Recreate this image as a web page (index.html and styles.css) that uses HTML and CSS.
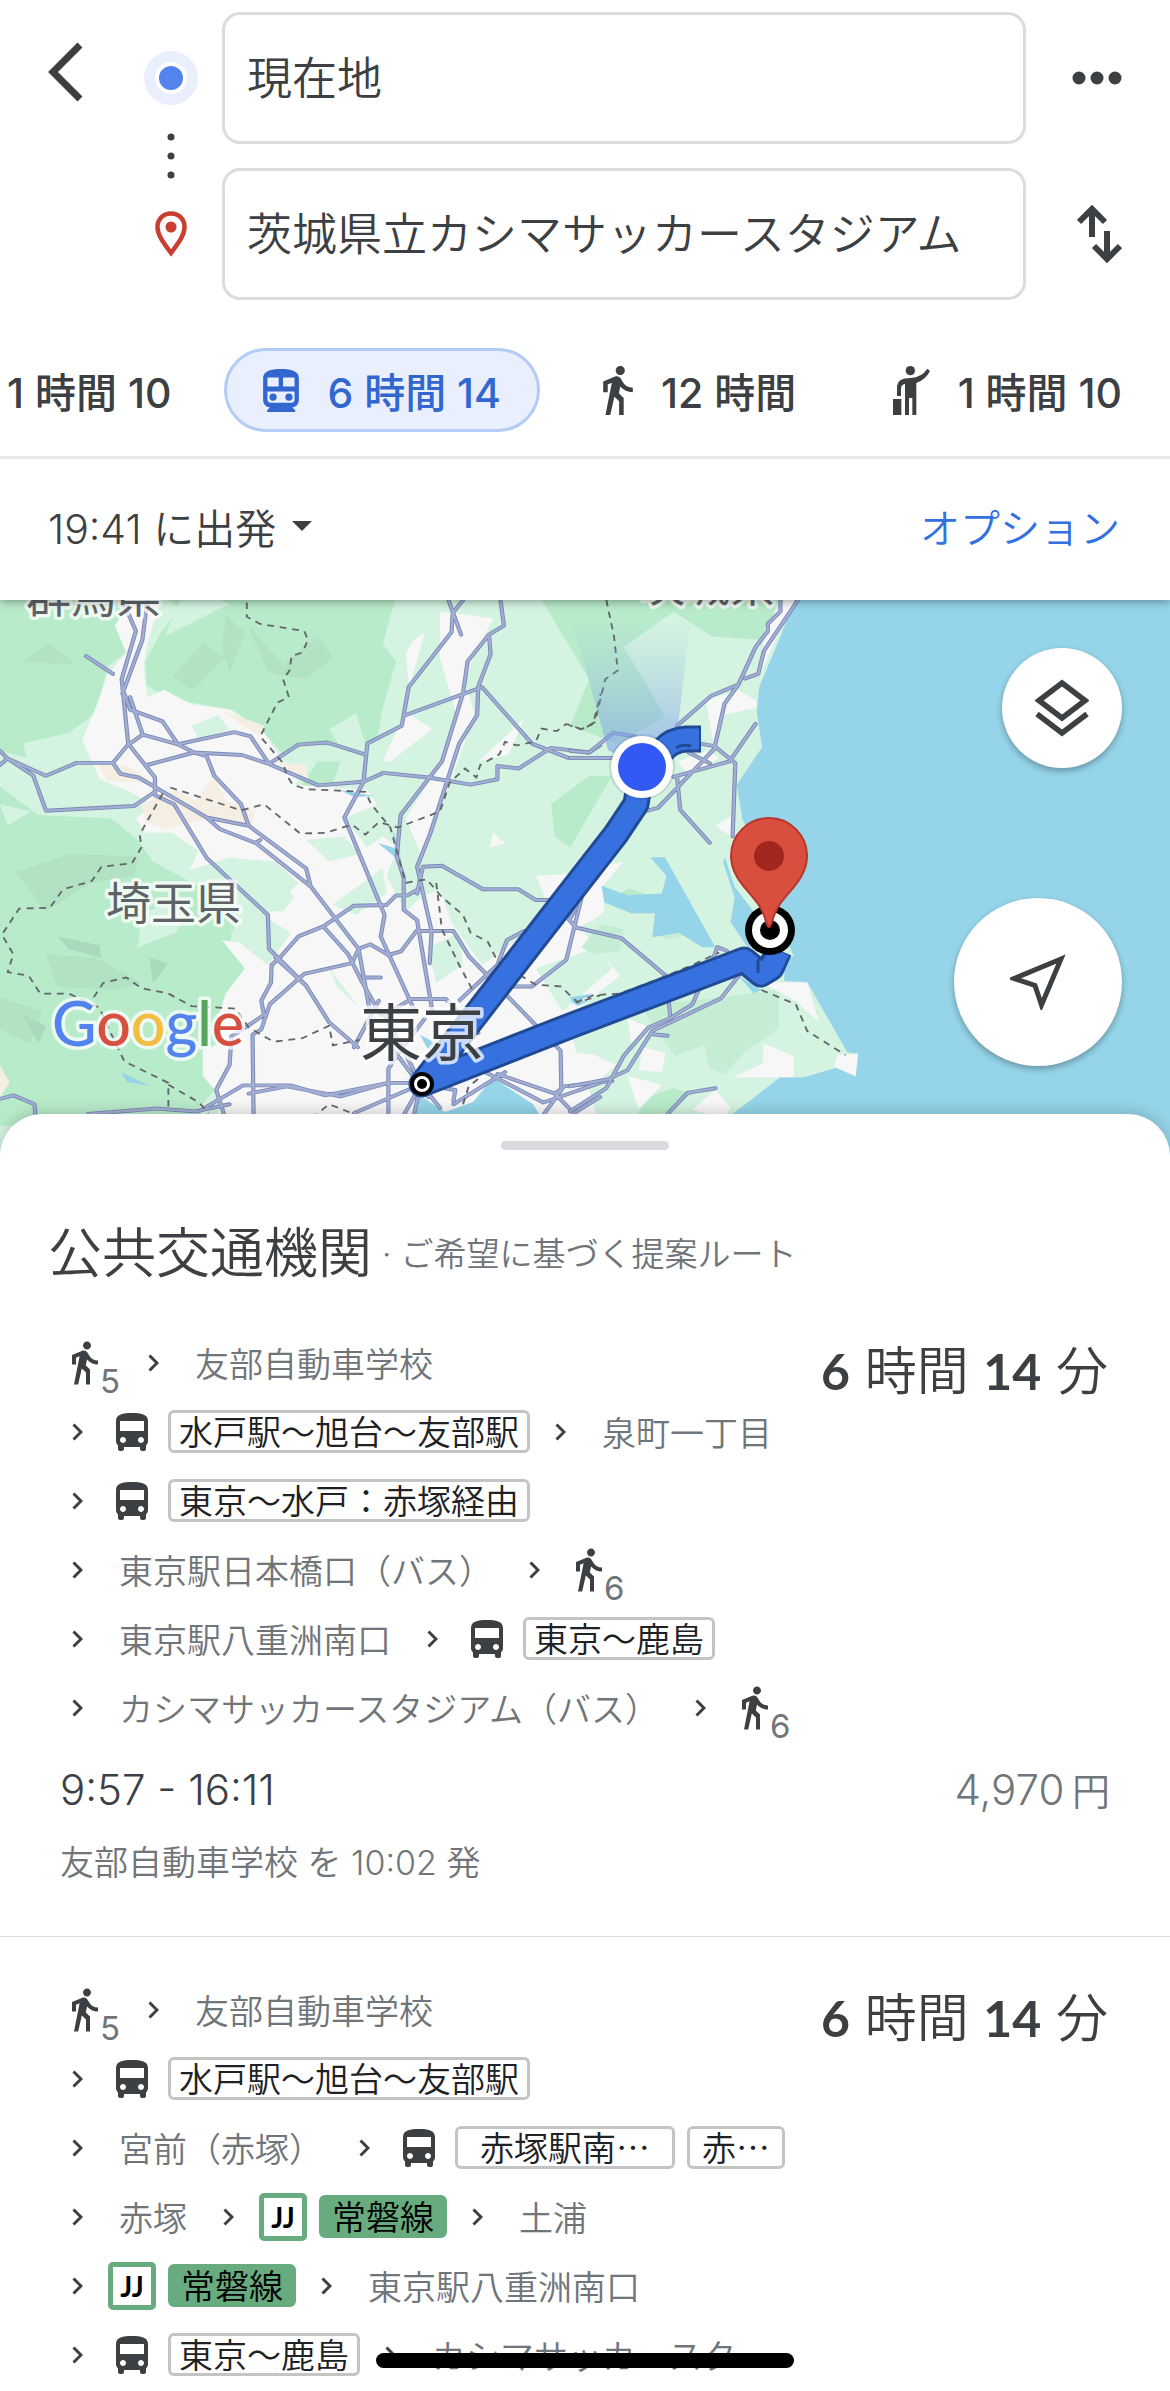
FILE: index.html
```html
<!DOCTYPE html>
<html lang="ja">
<head>
<meta charset="utf-8">
<meta name="viewport" content="width=device-width, initial-scale=1">
<title>経路</title>
<link rel="stylesheet" href="styles.css">
</head>
<body>
<svg class="defs" width="0" height="0" aria-hidden="true">
  <symbol id="walk" viewBox="6 1.5 13 21.5"><path d="M13.5 5.5c1.1 0 2-.9 2-2s-.9-2-2-2-2 .9-2 2 .9 2 2 2zM9.8 8.9L7 23h2.1l1.8-8 2.1 2v6h2v-7.500l-2.100-2 .6-3C14.800 12 16.800 13 19 13v-2c-1.900 0-3.500-1-4.300-2.400l-1-1.600c-.4-.6-1-1-1.700-1-.3 0-.5.1-.8.1L6 8.300V13h2V9.600l1.800-.7"/></symbol>
  <symbol id="bus" viewBox="4 2 16 19"><path d="M4 16c0 .88.39 1.670 1 2.220V20c0 .55.45 1 1 1h1c.55 0 1-.45 1-1v-1h8v1c0 .55.45 1 1 1h1c.55 0 1-.45 1-1v-1.780c.61-.55 1-1.340 1-2.220V6c0-3.500-3.580-4-8-4s-8 .5-8 4v10zm3.500 1c-.83 0-1.500-.67-1.500-1.500S6.670 14 7.500 14s1.500.67 1.500 1.500S8.330 17 7.500 17zm9 0c-.83 0-1.500-.67-1.500-1.500s.67-1.500 1.500-1.500 1.500.67 1.500 1.500-.67 1.500-1.500 1.500zm1.500-6H6V6h12v5z"/></symbol>
  <symbol id="chev" viewBox="0 0 11 18"><path d="M1.500 1.500L9 9l-7.500 7.500" fill="none" stroke="currentColor" stroke-width="3"/></symbol>
</svg>

<div class="screen">
  <header class="top">
    <div class="search">
      <button class="icon-btn back" aria-label="戻る"><svg width="36" height="60" viewBox="0 0 36 60"><path d="M32 3L5 30l27 27" fill="none" stroke="currentColor" stroke-width="7"/></svg></button>
      <svg class="stops" width="54" height="240" viewBox="0 0 54 240" aria-hidden="true">
        <circle cx="27" cy="42" r="27" fill="#e9effd"/><circle cx="27" cy="42" r="16" fill="#fff"/><circle cx="27" cy="42" r="12" fill="#5384ee"/>
        <g fill="#3c4043"><circle cx="27" cy="101" r="3.500"/><circle cx="27" cy="120" r="3.500"/><circle cx="27" cy="139" r="3.500"/></g>
        <path d="M27 177.500c-8 0-13.500 6-13.500 13.500 0 8 5.500 15 13.500 26 8-11 13.500-18 13.500-26 0-7.500-5.500-13.500-13.500-13.500z" fill="none" stroke="#c83f31" stroke-width="4.500"/><circle cx="27" cy="191" r="5.500" fill="#c83f31"/>
      </svg>
      <div class="fields">
        <input class="field" type="text" aria-label="出発地" value="現在地">
        <input class="field" type="text" aria-label="目的地" value="茨城県立カシマサッカースタジアム">
      </div>
      <div class="actions">
        <button class="icon-btn" aria-label="メニュー"><svg width="50" height="14" viewBox="0 0 50 14" fill="currentColor"><circle cx="7" cy="7" r="6.500"/><circle cx="25" cy="7" r="6.500"/><circle cx="43" cy="7" r="6.500"/></svg></button>
        <button class="icon-btn" aria-label="入れ替え"><svg width="45" height="60" viewBox="0 0 45 60" fill="none" stroke="currentColor" stroke-width="6"><path d="M15 33V5M2 18L15 5l13 13M30 27v28M17 42l13 13 13-13"/></svg></button>
      </div>
    </div>

    <nav class="modes" aria-label="移動手段">
      <button class="mode mode--first">1 時間 10</button>
      <button class="mode mode--on" aria-pressed="true">
        <svg width="36" height="43" viewBox="143 112 108 130" fill="currentColor"><path fill-rule="evenodd" d="M143 140c0-22 22-28 54-28s54 6 54 28v66c0 12-9 22-20 22l9 9v5h-85v-5l9-9c-12 0-21-10-21-22zM156 138v27h34v-27zM203 138v27h35v-27zM156 180v23q0 11 10 11h62q10 0 10-11v-23z"/><circle cx="173" cy="197" r="11"/><circle cx="221" cy="197" r="11"/></svg>
        6 時間 14</button>
      <button class="mode"><svg width="30" height="49" fill="currentColor"><use href="#walk"/></svg>12 時間</button>
      <button class="mode mode--last">
        <svg width="37" height="49" viewBox="72 555 111 147" fill="currentColor"><circle cx="124" cy="569" r="14"/><path d="M84 645V622q0-18 11-25 9-6 30-6 33-2 50-28l8 7q-13 26-41 36V702h-12V651h-10v51h-12V609q-12 2-12 15v21z"/><path d="M72 654h25v48H72z"/></svg>
        1 時間 10</button>
    </nav>

    <div class="depart">
      <button class="depart-time">19:41 に出発<svg width="20" height="10" viewBox="0 0 20 10" fill="currentColor" aria-hidden="true"><path d="M0 0h20L10 10z"/></svg></button>
      <a class="options" href="#options">オプション</a>
    </div>
  </header>

  <section class="map" aria-label="地図">
    <svg class="map-art" viewBox="0 600 1170 560" preserveAspectRatio="xMidYMin slice">
      <defs>
        <linearGradient id="beam" x1="0" y1="1" x2="0" y2="0"><stop offset="0" stop-color="#6f93e8" stop-opacity=".6"/><stop offset="1" stop-color="#8fb3ef" stop-opacity="0"/></linearGradient>
        <g id="roads-west">
          <path d="M320 28L355 115 318 250 335 430 405 525V575L455 600 540 750 700 910 703 1005 800 1108 860 1210 935 1280M385 28L372 140 320 290M225 185L295 235M340 300L373 405 465 432 507 455 632 462 703 487 780 433 855 427 953 460M325 290L340 335 425 368 465 432 612 398 655 410 703 487 832 547 950 537 1002 512 1120 525 1230 545 1300 530V493L1355 500 1440 442 1540 455 1568 435"/>
          <path d="M0 450L20 472 120 520 200 484H295L333 435 373 405M0 490L20 472 87 520 120 618 350 605 405 565M295 484L315 515 362 525 450 580 540 637 650 660 800 780 812 830 937 1005 965 1170M385 490L507 455 540 465 560 520 630 600 650 660M540 637L575 670 668 708 812 830M668 708L680 700"/>
          <path d="M1172 28L1205 125M1210 28L1183 65 1180 118 1068 272 1050 380 960 430 950 537 900 637 1005 910 995 970 1080 1170M1308 28L1317 100 1278 125 1222 200 1210 290 1155 480 1047 630 1037 745 1055 805V895L1090 925 1130 1180M1278 125L1282 180 1250 270 1247 350 1200 430 1125 680 1090 775 1128 955 1123 1045M1055 352L1260 272 1390 430 1485 470H1600"/>
          <path d="M1090 850L1105 775 1155 772 1262 838H1355L1400 868H1450M735 1025L780 970 845 942 925 884 1010 882 1035 855H1065L1090 840M845 942L910 1020 945 1095 995 1190M735 1025L710 1050 708 1100 683 1150 690 1190 605 1250 600 1330 565 1400 585 1467M720 1030L800 1108M795 1075L705 1160 683 1230 660 1245 663 1500M795 1075L920 1045 937 1005 968 992 1015 1022 1048 1012 1088 955H1185L1225 1025 1320 1130 1465 1290 1467 1400 1400 1500"/>
          <path d="M520 1460L635 1387H760L850 1415 1015 1380H1100M650 1410L750 1390 890 1418 1015 1380M925 1465L1100 1384 1190 1400 1185 1430M1100 1384L1055 1290 1005 1190 1075 1145H1165L1250 1240M925 1280L990 1150M1015 1465V1340L1060 1270 1110 1200M950 1085H995M1075 1500L1100 1384 1150 1450M1050 1480L1100 1384M1030 1290L1120 1420M0 1425L35 1415 90 1440 95 1500M230 1467L410 1452 510 1460 600 1440M1250 1340L1420 1435 1568 1380M1300 1355L1450 1410 1500 1465 1568 1420M1450 1410L1475 1390 1600 1375M1185 1440L1320 1350M1200 1150L1300 1050 1325 980 1370 955M1325 1110H1390L1480 1035 1520 860M1480 915L1505 945 1624 975 1740 1080 1752 1195M1505 890L1490 920"/>
        </g>
        <g id="roads-east">
          <path d="M596 28L507 170 492 235 457 248M550 28V60L517 95V115L485 160 440 265 368 297 280 380M440 265L404 318 377 445 230 610 195 620 170 650M485 375L417 480 270 523M340 430L377 437 432 485 425 690M280 525L288 615 365 708M0 450L50 455 113 400 170 410M0 470H110M310 455L365 485"/>
          <path d="M0 1390L100 1370 150 1345 215 1235 395 1143 445 1075M0 1460L95 1395 140 1305 205 1225 260 1200 320 1160 340 1110M375 1030L385 1000 410 1010M255 1467L307 1408 380 1395M210 1243L255 1248"/>
        </g>
      </defs>
      <rect y="560" width="1170" height="640" fill="#d4f3e0"/>
      <g transform="translate(0 590) scale(.38265 .35714)">
        <path fill="#b8ebca" d="M0 0H330L380 90 330 175 280 215 255 340 180 400 60 430 70 470 0 450zM400 0H1040L1000 150 1035 200 1000 330 985 420 955 430 930 345 860 390 890 440 800 430 740 460 690 400 610 335 470 310 430 280 385 290 380 200 420 120 470 50zM1400 0H2040L2000 140 1860 130 1760 60 1630 160 1740 355 1610 430 1490 380 1540 250zM0 550L100 630 290 640 360 700 400 760 520 830 625 900 600 990 640 1060 590 1130 560 1230 605 1280 530 1290V1360L560 1400 480 1500H0zM1540 520H1600L1490 720 1450 690 1440 600zM890 480L870 540 780 560 830 480z"/>
        <path fill="#b1e2c2" d="M650 100L740 210 830 130 870 190 800 250 700 230zM40 790L180 740 360 745 350 800 240 820 120 900zM120 1020L250 1030 370 1100 300 1120 150 1110zM60 200L130 150 200 210zM450 240L530 150 590 190 500 280zM0 1140L110 1180 80 1270 0 1230zM590 70L640 120 600 230 580 160z"/>
        <path fill="#a9dabb" d="M150 970L260 995 265 1030 180 1005zM60 1190L120 1220 100 1270zM390 1030L440 1045 400 1100z"/>
        <path fill="#d4f3e0" d="M430 130L560 60 600 40 560 20 470 30zM360 250L430 300 350 340zM370 900L500 870 460 960 360 1000zM0 600L80 620 20 660z"/>
        <path fill="#f7f7f7" d="M345 28H420L385 150 375 210 385 300 430 280 500 320 600 335 690 400 740 480 800 500 770 545 960 560 985 600 900 640 960 720 1000 690 1040 720 1010 800 1060 900 1100 860 1150 840 1180 930 1260 1050 1350 980 1440 900 1400 800 1560 790 1520 950 1620 1080 1480 1200 1520 1330 1568 1500H560L580 1420 530 1360V1290L590 1260 560 1230 590 1130 640 1060 580 980 700 1000V910L780 820 720 760 600 750 495 785 520 730 450 680 380 680 355 640 400 600 330 560 260 530 215 420 250 330 280 240 330 175 300 100zM1060 180L1080 140 1110 120 1070 270zM1150 60L1290 80 1240 180 1190 340 1150 190zM1000 480L1060 340 1130 390 1020 480zM1155 480L1200 330 1220 270 1240 350 1150 620 1100 740 1060 640zM1290 680L1320 710 1280 720zM1250 480L1370 360 1330 460z"/>
        <path fill="#f5efe3" d="M370 600L460 560 510 590 560 520 590 590 665 620 660 665 540 640 430 670 380 650zM575 335L690 380 680 410zM255 490H330L400 540 280 535zM720 480L800 490 805 530 740 500zM0 1330L25 1380 0 1420z"/>
        <path fill="#d4f3e0" d="M800 700L900 690 940 740 860 760zM680 900L720 810 770 860 740 900zM600 960L700 920 760 960 700 1050 640 1000zM870 880L1000 780 1010 850 930 910zM860 1060L940 1170 880 1110zM1120 1000L1200 960 1210 1050 1140 1100zM1280 900L1380 880 1330 960zM500 380L570 350 600 390 520 420zM1560 1000L1600 1060 1470 1180 1400 1060zM1500 1270L1640 1200 1700 1330 1600 1420 1520 1350z"/>
      </g>
      <g transform="translate(570 590) scale(.38265 .35714)">
        <path fill="#c4edd3" d="M180 1160L320 1150 545 1120V1230L460 1290 405 1355 365 1340 350 1275 275 1305zM30 1000L80 935 140 950 130 1010 60 1020zM220 960L270 930 320 960 260 980z"/>
        <path fill="#b8ebca" d="M120 855L155 835 205 855zM200 1420L270 1395 320 1410 240 1480H170z"/>
        <path fill="#f7f7f7" d="M355 310L440 280 488 310V330L400 350 375 430zM280 480L360 450 390 470 310 520zM600 28L550 110 495 240 510 100 560 28zM0 790L140 760 85 830 90 900 60 925 0 950zM380 660L420 635V690zM500 1100L620 1098 650 1210 590 1150zM700 1300H753L747 1362 690 1335zM505 1270L585 1305V1365H425L505 1325zM0 1295L60 1300 120 1330 70 1380 0 1400zM150 1360L240 1385 180 1455zM190 1280L250 1295 240 1350 180 1345zM150 1200L210 1225 160 1270zM320 1455L380 1400 420 1450 400 1480z"/>
        <path fill="#95d4e9" d="M596 0L550 130 495 270 488 340 502 440 436 545 450 640 520 800 530 900 585 1025 560 1040V1095L620 1098 725 1295 753 1298 747 1362 695 1338 610 1365H548L425 1467V1600H1600V0zM210 748H248L380 1000H345L285 960 215 972 222 905H160L90 875 82 828 150 855 240 850 252 800zM400 760L430 860 420 930 470 1010 480 900 430 830 405 750zM0 1140L60 1130 10 1160zM440 1080L500 1120 480 1130zM0 1150H50L20 1165z"/>
      </g>
      <path fill="#95d4e9" d="M415 1092l30 20 28-10 20-24 40 26 12 20v50H415zM420 1035l16 8-6 10zM340 790l34 6-20 1zM378 843l20 6 4 14zM393 830l8 24-6-4zM121 1072l28 14-22-4z"/>
      <g fill="none" stroke-linejoin="round" stroke-linecap="round">
        <g transform="translate(0 590) scale(.38265 .35714)"><use href="#roads-west" stroke="#7b89b8" stroke-width="11"/><use href="#roads-west" stroke="#a3afd2" stroke-width="6"/></g>
        <g transform="translate(570 590) scale(.38265 .35714)"><use href="#roads-east" stroke="#7b89b8" stroke-width="11"/><use href="#roads-east" stroke="#a3afd2" stroke-width="6"/></g>
      </g>
      <g fill="none" stroke="#62676c" stroke-width="5" stroke-dasharray="18 15">
        <g transform="translate(0 590) scale(.38265 .35714)"><path d="M645 35V75L680 95 795 115 805 140 790 175 762 185 757 225 740 250 755 300 725 315 680 410 740 485 750 520 765 545 800 558 955 565 970 600 1020 665 1060 820 1115 810 1155 860 1210 910 1230 960 1275 985 1300 1040 1400 1105 1465 1110 1510 1155 1568 1135M445 553L630 617 690 600 785 682 850 680 920 657 955 685 990 650 1040 665 1150 620 1175 540 1215 500 1245 525 1255 490 1305 460 1320 425 1350 435 1400 425 1415 388 1455 395 1480 375 1520 390 1550 375 1570 290M425 570L365 685 370 720 345 765 265 775 240 815 165 838 130 890 50 892 5 965 35 1020 20 1070 75 1080 105 1130 180 1130 260 1170 285 1230 325 1320 440 1380V1460M245 1140L270 1100 330 1085 370 1115 440 1130 500 1165 615 1172 650 1225 715 1265 790 1255 860 1220 870 1275 940 1260M440 1385L520 1435 545 1465M1140 820L1155 950 1200 1050 1240 1130M790 1500L860 1440 920 1465M1210 1440L1225 1390 1260 1360"/></g>
        <g transform="translate(570 590) scale(.38265 .35714)"><path d="M95 28L115 130 125 225 92 250 65 370 30 390 0 380M500 1120L590 1160 620 1235 720 1302M15 1155L60 1135 130 1130 230 1090 320 1050 390 1015"/></g>
      </g>
      <path d="M572 620L690 620 676 745 642 767 608 750z" fill="url(#beam)"/>
      <g fill="none" stroke-linejoin="round">
        <path d="M701 739h-15q-14 1-22 10l-22 18-6 37-20 30-42 54-152 196 148-58 174-66 17 14 10-6 8-18" stroke="#214a94" stroke-width="27"/>
        <path d="M699 739h-13q-14 1-22 10l-22 18-6 37-20 30-42 54-152 196 148-58 174-66 17 14 10-6 8-17" stroke="#3771e0" stroke-width="21"/>
        <path d="M758 973v-12l8-8M676 748q6-4 15-2" stroke="#214a94" stroke-width="3"/>
      </g>
      <g stroke="#fff" stroke-opacity=".75" stroke-width="7" stroke-linejoin="round" paint-order="stroke">
        <text class="map-area" x="26" y="613">群馬県</text>
        <text class="map-area" x="640" y="602">茨城県</text>
        <text class="map-area" x="106" y="920">埼玉県</text>
        <text class="map-city" x="360" y="1056">東京</text>
        <text class="map-brand" x="52" y="1046"><tspan fill="#5384ee">G</tspan><tspan fill="#d84f3f">o</tspan><tspan fill="#f2bd42">o</tspan><tspan fill="#5384ee">g</tspan><tspan fill="#57a55c">l</tspan><tspan fill="#d84f3f">e</tspan></text>
      </g>
      <circle cx="422" cy="1084" r="12" fill="#000"/><circle cx="422" cy="1084" r="8" fill="#fff"/><circle cx="422" cy="1084" r="5" fill="#000"/>
      <circle cx="642" cy="767" r="33" fill="#345" opacity=".15"/><circle cx="642" cy="767" r="31" fill="#fff"/><circle cx="642" cy="767" r="24" fill="#3259f4"/>
      <circle cx="770" cy="930" r="25" fill="#000"/><circle cx="770" cy="930" r="18" fill="#fff"/><circle cx="770" cy="930" r="10" fill="#000"/>
      <path d="M769 927c-3 0-2-8-9-20-8-14-29-28-29-51a38 38 0 0 1 76 0c0 23-21 37-29 51-7 12-6 20-9 20z" fill="#d84f3f" stroke="#b8352a" stroke-width="2"/><circle cx="769" cy="856" r="15" fill="#a0261e"/>
    </svg>
    <button class="fab fab--small" aria-label="レイヤ"><svg width="54" height="58" viewBox="0 0 54 58" fill="none" stroke="currentColor" stroke-width="5.500"><path d="M27 4L50 21.500 27 39 4 21.500zM2 35l25 19 25-19"/></svg></button>
    <button class="fab fab--large" aria-label="現在地を表示"><svg width="56" height="56" viewBox="0 0 56 56" fill="none" stroke="currentColor" stroke-width="5"><path d="M51 5L4 24.500l21 7 6.500 19.500z"/></svg></button>
  </section>

  <main class="sheet">
    <div class="handle"></div>
    <h1 class="title">公共交通機関<small class="title-note">· ご希望に基づく提案ルート</small></h1>

    <article class="route">
      <p class="duration"><b>6</b> 時間 <b>14</b> 分</p>
      <ul class="steps">
        <li class="step"><span class="walk"><svg class="walk-icon"><use href="#walk"/></svg>5</span><svg class="chev"><use href="#chev"/></svg><span class="stop">友部自動車学校</span></li>
        <li class="step"><svg class="chev"><use href="#chev"/></svg><span class="ride"><svg class="bus-icon"><use href="#bus"/></svg><span class="badge">水戸駅～旭台～友部駅</span></span><svg class="chev"><use href="#chev"/></svg><span class="stop">泉町一丁目</span></li>
        <li class="step"><svg class="chev"><use href="#chev"/></svg><span class="ride"><svg class="bus-icon"><use href="#bus"/></svg><span class="badge">東京～水戸：赤塚経由</span></span></li>
        <li class="step"><svg class="chev"><use href="#chev"/></svg><span class="stop">東京駅日本橋口（バス）</span><svg class="chev"><use href="#chev"/></svg><span class="walk"><svg class="walk-icon"><use href="#walk"/></svg>6</span></li>
        <li class="step"><svg class="chev"><use href="#chev"/></svg><span class="stop">東京駅八重洲南口</span><svg class="chev"><use href="#chev"/></svg><span class="ride"><svg class="bus-icon"><use href="#bus"/></svg><span class="badge">東京～鹿島</span></span></li>
        <li class="step"><svg class="chev"><use href="#chev"/></svg><span class="stop">カシマサッカースタジアム（バス）</span><svg class="chev"><use href="#chev"/></svg><span class="walk"><svg class="walk-icon"><use href="#walk"/></svg>6</span></li>
      </ul>
      <div class="summary"><span>9:57 - 16:11</span><span class="fare">4,970&#8201;<span class="yen">円</span></span></div>
      <p class="boarding">友部自動車学校 を 10:02 発</p>
    </article>

    <article class="route">
      <p class="duration"><b>6</b> 時間 <b>14</b> 分</p>
      <ul class="steps">
        <li class="step"><span class="walk"><svg class="walk-icon"><use href="#walk"/></svg>5</span><svg class="chev"><use href="#chev"/></svg><span class="stop">友部自動車学校</span></li>
        <li class="step"><svg class="chev"><use href="#chev"/></svg><span class="ride"><svg class="bus-icon"><use href="#bus"/></svg><span class="badge">水戸駅～旭台～友部駅</span></span></li>
        <li class="step"><svg class="chev"><use href="#chev"/></svg><span class="stop">宮前（赤塚）</span><svg class="chev"><use href="#chev"/></svg><span class="ride"><svg class="bus-icon"><use href="#bus"/></svg><span class="badges"><span class="badge badge--wide">赤塚駅南…</span><span class="badge badge--short">赤…</span></span></span></li>
        <li class="step"><svg class="chev"><use href="#chev"/></svg><span class="stop">赤塚</span><svg class="chev"><use href="#chev"/></svg><span class="ride ride--rail"><span class="line-code">JJ</span><span class="badge badge--rail">常磐線</span></span><svg class="chev"><use href="#chev"/></svg><span class="stop">土浦</span></li>
        <li class="step"><svg class="chev"><use href="#chev"/></svg><span class="ride ride--rail"><span class="line-code">JJ</span><span class="badge badge--rail">常磐線</span></span><svg class="chev"><use href="#chev"/></svg><span class="stop">東京駅八重洲南口</span></li>
        <li class="step"><svg class="chev"><use href="#chev"/></svg><span class="ride"><svg class="bus-icon"><use href="#bus"/></svg><span class="badge">東京～鹿島</span></span><svg class="chev"><use href="#chev"/></svg><span class="stop">カシマサッカースタ…</span></li>
      </ul>
    </article>
  </main>
  <div class="home-bar"></div>
</div>
</body>
</html>
```

FILE: styles.css
```css
* { box-sizing: border-box; }

body {
  margin: 0;
  background: #fff;
  color: #3c4043;
  font-family: Inter, "Noto Sans CJK JP", sans-serif;
  font-size: 34px;
  font-weight: 350;
}

button, input { font: inherit; color: inherit; }
button { border: 0; padding: 0; background: none; }
svg { display: block; flex: none; }
p, h1, ul { margin: 0; padding: 0; }
.defs { position: absolute; }

.screen { position: relative; overflow: hidden; }

/* Search header */
.top {
  position: relative;
  z-index: 1;
  background: #fff;
  box-shadow: 0 2px 8px rgba(0, 0, 0, .35);
}

.search {
  display: flex;
  align-items: flex-start;
  padding: 12px 48px 0;
}

.back { margin-top: 30px; }
.stops { margin: 24px 24px 0 60px; height: 240px; }

.fields {
  flex: 1;
  display: flex;
  flex-direction: column;
  gap: 24px;
}

.field {
  width: 100%;
  height: 132px;
  border: 3px solid #dadce0;
  border-radius: 18px;
  padding: 0 22px 5px;
  background: #fff;
  font-size: 45px;
  outline: 0;
}

.actions {
  width: 96px;
  display: flex;
  flex-direction: column;
  gap: 24px;
}

.actions .icon-btn {
  height: 132px;
  display: flex;
  align-items: center;
  justify-content: flex-end;
}

/* Travel modes */
.modes {
  display: flex;
  align-items: center;
  height: 159px;
  border-bottom: 3px solid #e8e8ed;
  padding: 24px 48px 0 4px;
  white-space: nowrap;
}

.mode {
  display: flex;
  align-items: center;
  gap: 28px;
  height: 84px;
  padding: 0 36px;
  border: 3px solid transparent;
  border-radius: 42px;
  font-size: 41px;
  font-weight: 500;
}

.mode--first { padding: 0; margin-right: 50px; }
.mode--last { padding-right: 0; margin-left: auto; border-right: 0; }
.mode--on {
  margin-right: 24px;
  border-color: #b3cbf7;
  background: #e9effd;
  color: #3267cf;
}

/* Departure time */
.depart {
  display: flex;
  align-items: center;
  justify-content: space-between;
  height: 141px;
  padding: 0 50px 8px 48px;
  font-size: 40px;
}

.depart-time {
  display: flex;
  align-items: center;
  gap: 16px;
  font-size: 41px;
}
.options { color: #3271e0; text-decoration: none; }

/* Map */
.map {
  position: relative;
  height: 560px;
}

.map-art { width: 100%; height: 100%; }
.map-area { font-size: 45px; fill: #5f6368; font-weight: 400; }
.map-city { font-size: 62px; fill: #3c4043; font-weight: 400; }
.map-brand { font-family: Lato, sans-serif; font-size: 61px; font-weight: 500; }

.fab {
  position: absolute;
  right: 48px;
  display: flex;
  align-items: center;
  justify-content: center;
  border-radius: 50%;
  background: #fff;
  box-shadow: 0 3px 6px rgba(0, 0, 0, .3);
}
.fab--small { top: 48px; width: 120px; height: 120px; }
.fab--large { top: 298px; width: 168px; height: 168px; }

/* Results sheet */
.sheet {
  position: relative;
  margin-top: -46px;
  padding-top: 27px;
  border-radius: 42px 42px 0 0;
  background: #fff;
  box-shadow: 0 -2px 14px rgba(0, 0, 0, .18);
}

.handle {
  width: 168px;
  height: 9px;
  margin: 0 auto;
  border-radius: 5px;
  background: #d9dadf;
}

.title {
  display: flex;
  align-items: center;
  gap: 10px;
  margin-top: 68px;
  padding: 0 48px;
  font-size: 54px;
  line-height: 72px;
  font-weight: 350;
}
.title-note { font-size: 33px; color: #70757a; }

.route {
  position: relative;
  padding: 38px 60px 49px;
  border-bottom: 1px solid #dadce0;
}
.route:last-child { border: 0; padding-bottom: 3px; }

.duration {
  position: absolute;
  top: 38px;
  right: 62px;
  font-size: 52px;
  line-height: 86px;
}
.duration b { font-family: Lato, sans-serif; font-size: 50px; font-weight: 700; }

.steps {
  list-style: none;
  padding-left: 12px;
  font-family: "Noto Sans CJK JP", sans-serif;
}
.step {
  display: flex;
  align-items: center;
  height: 69px;
  white-space: nowrap;
}

.chev { width: 11px; height: 18px; }
.stop { padding: 0 36px; color: #70757a; }

.walk {
  display: flex;
  align-items: flex-end;
  gap: 2px;
  padding: 10px 28px 0 36px;
  color: #70757a;
  font-family: Inter, sans-serif;
  font-size: 33px;
  line-height: 28px;
  font-weight: 400;
}
.walk:first-child { padding-left: 0; }
.walk-icon { width: 26px; height: 44px; margin-bottom: 10px; fill: #3c4043; }

.ride {
  display: flex;
  align-items: center;
  gap: 20px;
  padding: 0 25px 0 33px;
}
.ride--rail { gap: 12px; padding-left: 25px; }
.bus-icon { width: 32px; height: 38px; fill: #3c4043; }
.badges { display: flex; gap: 12px; }

.badge {
  height: 43px;
  padding: 0 8px;
  border: 3px solid #c4c4c4;
  border-radius: 6px;
  color: #202124;
  line-height: 36px;
}
.badge--wide { padding: 0 22px; }
.badge--short { padding: 0 12px; }
.badge--rail { padding: 0 10px; border-color: #67ab7e; background: #67ab7e; color: #000; }

.line-code {
  width: 48px;
  height: 48px;
  border: 5px solid #67ab7e;
  border-radius: 5px;
  color: #000;
  font-family: Lato, sans-serif;
  font-size: 28px;
  font-weight: 700;
  line-height: 38px;
  text-align: center;
}

.summary {
  display: flex;
  justify-content: space-between;
  margin-top: 18px;
  font-size: 42px;
  line-height: 60px;
}
.fare { color: #70757a; }
.yen { font-size: 38px; }

.boarding {
  margin-top: 18px;
  color: #70757a;
  line-height: 48px;
}

.home-bar {
  position: absolute;
  left: 50%;
  bottom: 24px;
  width: 418px;
  height: 15px;
  margin-left: -209px;
  border-radius: 8px;
  background: #000;
}
```
